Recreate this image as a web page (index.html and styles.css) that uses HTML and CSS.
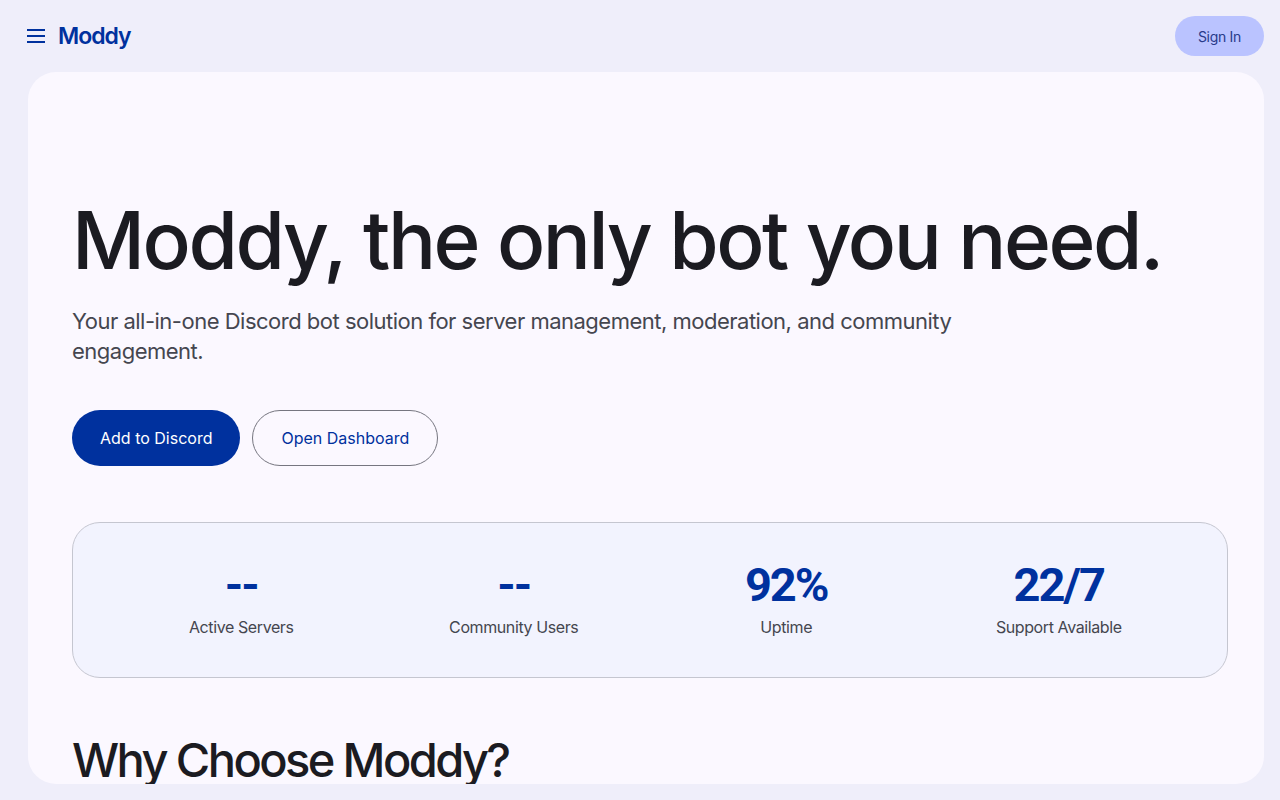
FILE: index.html
```html
<!DOCTYPE html>
<html lang="en">
<head>
<meta charset="utf-8">
<title>Moddy</title>
<link rel="stylesheet" href="styles.css">
</head>
<body>
<header class="topbar">
  <div class="brand">
    <button class="menu-btn" aria-label="Menu">
      <svg width="24" height="24" viewBox="0 0 24 24"><path d="M3 6h18M3 12h18M3 18h18" stroke="#00319e" stroke-width="2" fill="none"/></svg>
    </button>
    <span class="logo">Moddy</span>
  </div>
  <button class="signin">Sign In</button>
</header>
<main class="card">
  <section class="hero">
    <h1 class="title">Moddy, the only bot you need.</h1>
    <p class="subtitle">Your all-in-one Discord bot solution for server management, moderation, and community engagement.</p>
    <div class="actions">
      <button class="btn btn-filled">Add to Discord</button>
      <button class="btn btn-outline">Open Dashboard</button>
    </div>
  </section>
  <section class="stats">
    <div class="stat"><div class="stat-num">--</div><div class="stat-label">Active Servers</div></div>
    <div class="stat"><div class="stat-num">--</div><div class="stat-label">Community Users</div></div>
    <div class="stat"><div class="stat-num">92%</div><div class="stat-label">Uptime</div></div>
    <div class="stat"><div class="stat-num">22/7</div><div class="stat-label">Support Available</div></div>
  </section>
  <h2 class="section-title">Why Choose Moddy?</h2>
</main>
</body>
</html>
```
FILE: styles.css
```css
* { box-sizing: border-box; }
html, body { margin: 0; padding: 0; }
body {
  background: #efeefa;
  font-family: Inter, "Noto Sans", sans-serif;
  color: #1b1b21;
  height: 800px;
  overflow: hidden;
}
.topbar {
  height: 72px;
  display: flex;
  align-items: center;
  justify-content: space-between;
  padding: 0 16px 0 24px;
}
.brand { display: flex; align-items: center; gap: 10px; }
.menu-btn {
  background: none; border: 0; padding: 0; width: 24px; height: 24px;
  display: flex; align-items: center; justify-content: center;
}
.logo {
  font-size: 23px;
  font-weight: 600;
  color: #00319e;
  letter-spacing: -1px;
}
.signin {
  height: 40px;
  padding: 0 23px;
  border: 0;
  border-radius: 20px;
  background: #bac3ff;
  color: #283a8a;
  font-family: inherit;
  font-size: 14px;
  font-weight: 400;
  letter-spacing: -0.3px;
}
.card {
  margin: 0 16px 0 28px;
  height: 712px;
  background: #fbf8ff;
  border-radius: 28px;
  overflow: hidden;
  padding: 118px 36px 0 44px;
}
.title {
  margin: 0;
  font-size: 80px;
  font-weight: 500;
  letter-spacing: -2.45px;
  line-height: 100px;
  color: #1b1b21;
}
.subtitle {
  margin: 16px 0 0;
  max-width: 930px;
  font-size: 22px;
  line-height: 30px;
  color: #45464f;
  letter-spacing: -0.5px;
}
.actions {
  display: flex;
  gap: 12px;
  margin-top: 44px;
}
.btn {
  height: 56px;
  border-radius: 28px;
  padding: 0 28px;
  font-family: inherit;
  font-size: 16px;
  letter-spacing: 0;
}
.btn-filled { background: #00319e; color: #ffffff; border: 0; }
.btn-outline { background: transparent; color: #00319e; border: 1px solid #767680; }
.stats {
  margin-top: 56px;
  display: grid;
  grid-template-columns: repeat(4, 1fr);
  padding: 34px 32px;
  height: 156px;
  background: #f2f3fe;
  border: 1px solid #c5c6d0;
  border-radius: 28px;
}
.stat { display: flex; flex-direction: column; align-items: center; }
.stat-num {
  font-family: Roboto, Inter, sans-serif;
  font-size: 47px;
  font-weight: 700;
  line-height: 56px;
  color: #00319e;
  letter-spacing: -2px;
}
.stat-label {
  margin-top: 2px;
  font-size: 16px;
  line-height: 24px;
  color: #45464f;
  letter-spacing: -0.4px;
}
.section-title {
  margin: 54px 0 0;
  font-size: 47px;
  font-weight: 500;
  line-height: 56px;
  letter-spacing: -2.6px;
  color: #1b1b21;
}
```
